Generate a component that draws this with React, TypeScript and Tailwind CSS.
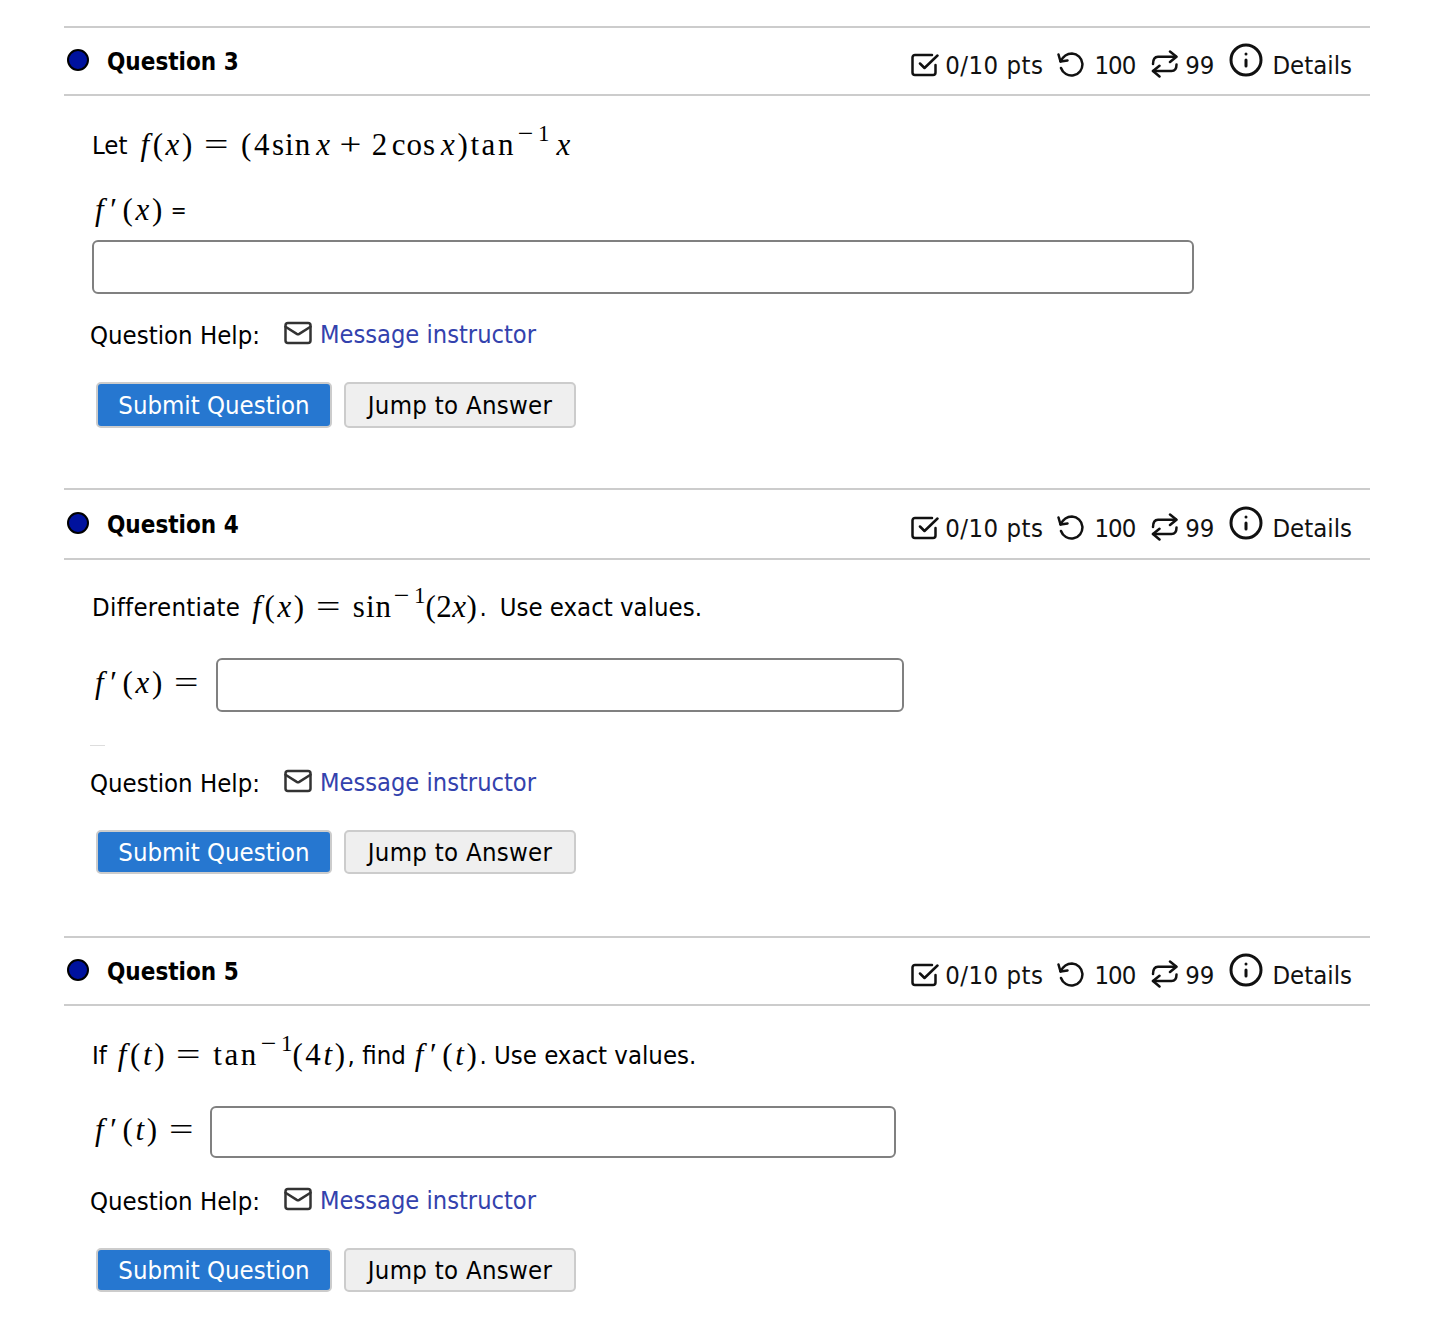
import { Info, Mail } from "lucide-react";
import type { ReactNode } from "react";

function M({ children }: { children: ReactNode }) {
  return <span className="font-['Liberation_Serif',serif] text-[31px] tracking-[2.6px] text-black">{children}</span>;
}

function I({ children }: { children: ReactNode }) {
  return <i className="italic">{children}</i>;
}

function F() {
  return <i className="italic mr-[1px]">f</i>;
}

function W({ children }: { children: ReactNode }) {
  return <span className="tracking-[1px]">{children}</span>;
}

function Tight({ children }: { children: ReactNode }) {
  return <span className="tracking-[0.5px]">{children}</span>;
}

function Gap({ w }: { w: string }) {
  return <span className={`inline-block ${w}`} />;
}

function InvSup() {
  return (
    <span className="text-[23px] tracking-normal align-[14px] leading-none">
      <span className="inline-block ml-[3px] scale-x-[1.2]">−</span>
      <span className="ml-[6px]">1</span>
    </span>
  );
}

// operators in the reference are wider than the serif glyphs, so stretch them a bit
function Eq() {
  return <span className="inline-block mx-[13px] scale-x-[1.4]">=</span>;
}

function Plus() {
  return <span className="inline-block ml-[9px] mr-[10px] scale-x-[1.25]">+</span>;
}

function Prime({ children }: { children: ReactNode }) {
  return (
    <span className="ml-[3px]">
      <I>f</I>
      <span className="ml-[4px] mr-[3px]">′</span>
      {children}
    </span>
  );
}

function CheckIcon() {
  return (
    <svg width="28" height="24" viewBox="0 0 28 24" fill="none" stroke="currentColor" strokeWidth="2.5" strokeLinecap="round" strokeLinejoin="round">
      <path d="M21 2H4a2.5 2.5 0 0 0-2.5 2.5v15A2.5 2.5 0 0 0 4 22h18a2.5 2.5 0 0 0 2.5-2.5V12" />
      <path d="M9 10.5l4.5 4.5L26.5 2.5" />
    </svg>
  );
}

function RetryIcon() {
  return (
    <svg width="28" height="25" viewBox="0 0 28 25" fill="none" stroke="currentColor" strokeWidth="2.5" strokeLinecap="round" strokeLinejoin="round">
      <path d="M1.5 2.5L3.5 9.5L10.5 8.5" />
      <path d="M3.5 9.5C6 4.5 10 1.5 15 1.5A11 11 0 1 1 4 16" />
    </svg>
  );
}

function RepeatIcon() {
  return (
    <svg width="28" height="28" viewBox="0 0 28 28" fill="none" stroke="currentColor" strokeWidth="2.5" strokeLinecap="round" strokeLinejoin="round">
      <path d="M2 14C2 9 3.5 6.7 7 6.7H25" />
      <path d="M19 1.5L25.5 6.7L19 12" />
      <path d="M25.5 14.5C25.5 18.5 24 21 20.5 21H2" />
      <path d="M8.5 15.7L2 21L8.5 26.5" />
    </svg>
  );
}

function Header({ num, h }: { num: number; h: string }) {
  return (
    <div className={`flex items-center justify-between ${h} border-y-2 border-[#ccc] pl-[3px] pr-[18px]`}>
      <div className="flex items-center">
        <span className="w-[22px] h-[22px] -mt-[2px] rounded-full bg-[#00129e] border-2 border-black" />
        <span className="ml-[18px] mt-[1px] font-bold text-[24px] text-black">Question {num}</span>
      </div>
      <div className="flex items-center text-[25.5px] text-[#111] pt-[8px]">
        <CheckIcon />
        <span className="ml-[6px] tracking-[0.5px]">0/10 pts</span>
        <span className="ml-[14px] mr-[9px] -mt-[2px]">
          <RetryIcon />
        </span>
        <span className="tracking-[-1px]">100</span>
        <span className="ml-[16px] mr-[6px] -mt-[2px]">
          <RepeatIcon />
        </span>
        <span>99</span>
        <Info className="w-[36px] h-[36px] ml-[14px] mr-[8px] -mt-[10px]" strokeWidth={2} />
        <span>Details</span>
      </div>
    </div>
  );
}

function Help() {
  return (
    <div className="flex items-center pl-[26px] h-[40px] text-[25.5px]">
      <span className="text-black">Question Help:</span>
      <Mail className="w-[30px] h-[30px] ml-[23px] mr-[7px] -mt-[4px] text-[#333]" strokeWidth={2} />
      <a className="text-[#3342ad] text-[25.2px]">Message instructor</a>
    </div>
  );
}

function Buttons({ h }: { h: string }) {
  return (
    <div className="flex pl-[32px] gap-[12px] text-[25.5px]">
      <button className={`${h} w-[236px] rounded-[5px] bg-[#2677d0] border-2 border-[#ccc] text-white`}>Submit Question</button>
      <button className={`${h} w-[232px] rounded-[5px] bg-[#efefef] border-2 border-[#ccc] text-black tracking-[0.3px]`}>Jump to Answer</button>
    </div>
  );
}

export default function App() {
  return (
    <div className="w-[1436px] h-[1332px] bg-white pt-[26px] pl-[64px] pr-[66px] font-['DejaVu_Sans_Condensed','Noto_Sans',sans-serif]">
      <Header num={3} h="h-[70px]" />
      <div className="mt-[27px] ml-[28px] h-[44px] flex items-center text-[25.5px] whitespace-pre">
        <span className="mr-[13px]">Let</span>
        <M>
          <F />(<I>x</I>)<Eq />(4<W>sin</W><Gap w="w-[5px]" /><I>x</I>
          <Plus />2<Gap w="w-[2px]" /><W>cos</W><Gap w="w-[5px]" /><I>x</I>)tan<InvSup /><span className="ml-[7px]"><I>x</I></span>
        </M>
      </div>
      <div className="mt-[25px] ml-[28px] h-[36px] flex items-center text-[25.5px] whitespace-pre">
        <M>
          <Prime>
            (<I>x</I>)
          </Prime>
        </M>
        <span className="ml-[6px] mt-[3px] text-[21px]">=</span>
      </div>
      <input className="block mt-[12px] ml-[28px] w-[1102px] h-[54px] rounded-[6px] border-2 border-[#808080] bg-white" />
      <div className="mt-[21px]">
        <Help />
      </div>
      <div className="mt-[27px]">
        <Buttons h="h-[46px]" />
      </div>

      <div className="mt-[60px]">
        <Header num={4} h="h-[72px]" />
      </div>
      <div className="mt-[25px] ml-[28px] h-[44px] flex items-center text-[25.5px] whitespace-pre">
        <span className="mr-[12px] tracking-[0.3px]">Differentiate</span>
        <M>
          <F />(<I>x</I>)<Eq /><W>sin</W><InvSup /><Tight>(2<I>x</I>)</Tight>
        </M>
        <span className="ml-[2px]">.</span>
        <span className="ml-[13px]">Use exact values.</span>
      </div>
      <div className="mt-[29px] ml-[28px] flex items-center h-[54px] whitespace-pre">
        <span className="mb-[4px]">
          <M>
            <Prime>
              (<I>x</I>)
            </Prime>
            <Eq />
          </M>
        </span>
        <input className="ml-[5px] w-[688px] h-[54px] rounded-[6px] border-2 border-[#808080] bg-white" />
      </div>
      <div className="mt-[33px] ml-[26px] w-[15px] h-px bg-[#ddd]" />
      <div className="mt-[17px]">
        <Help />
      </div>
      <div className="mt-[27px]">
        <Buttons h="h-[44px]" />
      </div>

      <div className="mt-[62px]">
        <Header num={5} h="h-[70px]" />
      </div>
      <div className="mt-[27px] ml-[28px] h-[44px] flex items-center text-[25.5px] whitespace-pre">
        <span className="mr-[11px]">If</span>
        <M>
          <F />(<I>t</I>)<Eq />tan<InvSup />(4<I>t</I>)
        </M>
        <span>, find</span>
        <span className="ml-[6px]">
          <M>
            <Prime>
              (<I>t</I>)
            </Prime>
          </M>
        </span>
        <span>. Use exact values.</span>
      </div>
      <div className="mt-[29px] ml-[28px] flex items-center h-[52px] whitespace-pre">
        <span className="mb-[4px]">
          <M>
            <Prime>
              (<I>t</I>)
            </Prime>
            <Eq />
          </M>
        </span>
        <input className="ml-[4px] w-[686px] h-[52px] rounded-[6px] border-2 border-[#808080] bg-white" />
      </div>
      <div className="mt-[23px]">
        <Help />
      </div>
      <div className="mt-[27px]">
        <Buttons h="h-[44px]" />
      </div>
    </div>
  );
}
